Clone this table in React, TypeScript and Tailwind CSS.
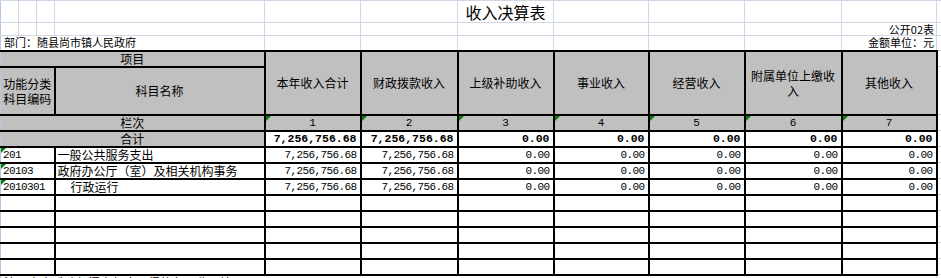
const colWidths = [18, 18, 18, 210, 96, 97, 96, 95, 96, 97, 95, 5];

const headers = [
  "本年收入合计",
  "财政拨款收入",
  "上级补助收入",
  "事业收入",
  "经营收入",
  "附属单位上缴收入",
  "其他收入",
];

const zeros = ["0.00", "0.00", "0.00", "0.00", "0.00"];

const rows = [
  { code: "201", name: "一般公共服务支出", indent: false, values: ["7,256,756.68", "7,256,756.68", ...zeros] },
  { code: "20103", name: "政府办公厅（室）及相关机构事务", indent: false, values: ["7,256,756.68", "7,256,756.68", ...zeros] },
  { code: "2010301", name: "行政运行", indent: true, values: ["7,256,756.68", "7,256,756.68", ...zeros] },
];

const emptyRows = 5;

const cjk = "font-['Noto_Sans_CJK_SC',sans-serif]";
const mono = "font-['Liberation_Mono','Noto_Sans_CJK_SC',monospace]";
const light = "border border-[#d0d7e5] p-0";
const dark = "border-2 border-black p-0";
const firstCol = "border-l border-l-[#b4c8e6]";

function Flag() {
  // the little green comment-ish marker Excel draws for text numbers
  return (
    <span className="absolute left-0 top-0 w-0 h-0 border-t-[5px] border-r-[5px] border-t-[#008000] border-r-transparent" />
  );
}

function App() {
  return (
    <div className={`w-[941px] h-[278px] overflow-hidden bg-white text-black ${cjk}`}>
      <table className="table-fixed border-collapse w-[941px]">
        <colgroup>
          {colWidths.map((w, i) => (
            <col key={i} style={{ width: w }} />
          ))}
        </colgroup>
        <tbody>
          {/* title row */}
          <tr className="h-[22px]">
            {colWidths.map((_, i) => (
              <td key={i} className={`${light} ${i === 0 ? firstCol : ""} align-bottom`}>
                {i === 6 && (
                  <div className="relative h-[21px]">
                    <span className="absolute left-1/2 -translate-x-1/2 bottom-[1px] whitespace-nowrap text-[16px] leading-[18px]">
                      收入决算表
                    </span>
                  </div>
                )}
              </td>
            ))}
          </tr>
          <tr className="h-[13px]">
            {colWidths.map((_, i) => (
              <td key={i} className={`${light} ${i === 0 ? firstCol : ""}`}>
                {i === 10 && (
                  <div className="text-right whitespace-nowrap text-[11px] leading-[12px] pr-[2px]">公开02表</div>
                )}
              </td>
            ))}
          </tr>
          <tr className="h-[15px]">
            <td colSpan={4} className={`${light} ${firstCol}`}>
              <div className="whitespace-nowrap text-[11px] leading-[13px] pl-[3px]">部门：随县尚市镇人民政府</div>
            </td>
            {colWidths.slice(4).map((_, i) => (
              <td key={i} className={light}>
                {i === 6 && (
                  <div className="text-right whitespace-nowrap text-[11px] leading-[13px] pr-[2px]">金额单位：元</div>
                )}
              </td>
            ))}
          </tr>

          {/* header */}
          <tr className="h-[16px]">
            <td colSpan={4} className={`${dark} ${firstCol} bg-[#c0c0c0] text-center text-[12px] leading-[14px]`}>
              项目
            </td>
            {headers.map((h) => (
              <td key={h} rowSpan={2} className={`${dark} bg-[#c0c0c0] text-center text-[12px] leading-[15px] px-[4px]`}>
                {h}
              </td>
            ))}
            <td className={light} />
          </tr>
          <tr className="h-[48px]">
            <td colSpan={3} className={`${dark} ${firstCol} bg-[#c0c0c0] text-center text-[12px] leading-[15px]`}>
              功能分类
              <br />
              科目编码
            </td>
            <td className={`${dark} bg-[#c0c0c0] text-center text-[12px] leading-[14px]`}>科目名称</td>
            <td className={light} />
          </tr>

          {/* 栏次 */}
          <tr className="h-[16px]">
            <td colSpan={4} className={`${dark} ${firstCol} bg-[#c0c0c0] text-center text-[12px] leading-[14px]`}>
              栏次
            </td>
            {[1, 2, 3, 4, 5, 6, 7].map((n) => (
              <td key={n} className={`${dark} relative bg-[#c0c0c0] text-center text-[11px] leading-[14px] ${mono}`}>
                <Flag />
                {n}
              </td>
            ))}
            <td className={light} />
          </tr>

          {/* 合计 */}
          <tr className="h-[16px]">
            <td colSpan={4} className={`${dark} ${firstCol} bg-[#c0c0c0] text-center text-[12px] leading-[14px]`}>
              合计
            </td>
            {rows[0].values.map((v, i) => (
              <td key={i} className={`${dark} text-right font-bold text-[11.5px] leading-[14px] pr-[3px] ${mono}`}>
                {v}
              </td>
            ))}
            <td className={light} />
          </tr>

          {rows.map((r) => (
            <tr key={r.code} className="h-[16px]">
              <td colSpan={3} className={`${dark} ${firstCol} relative text-[11px] tracking-[-0.6px] leading-[14px] pl-[2px] ${mono}`}>
                <Flag />
                {r.code}
              </td>
              <td className={`${dark} text-[12px] leading-[14px] whitespace-nowrap ${r.indent ? "pl-[15px]" : "pl-[2px]"}`}>
                {r.name}
              </td>
              {r.values.map((v, i) => (
                <td key={i} className={`${dark} text-right text-[11px] tracking-[-0.6px] leading-[14px] pr-[3px] ${mono}`}>
                  {v}
                </td>
              ))}
              <td className={light} />
            </tr>
          ))}

          {Array.from({ length: emptyRows }).map((_, k) => (
            <tr key={k} className="h-[16px]">
              <td colSpan={3} className={`${dark} ${firstCol}`} />
              <td className={dark} />
              {headers.map((h) => (
                <td key={h} className={dark} />
              ))}
              <td className={light} />
            </tr>
          ))}

          <tr className="h-[16px]">
            <td colSpan={11} className={`${light} ${firstCol}`}>
              <div className="whitespace-nowrap text-[12px] leading-[14px] pl-[3px]">
                注：本表反映部门本年度取得的各项收入情况。
              </div>
            </td>
            <td className={light} />
          </tr>
        </tbody>
      </table>
    </div>
  );
}

export default App;
